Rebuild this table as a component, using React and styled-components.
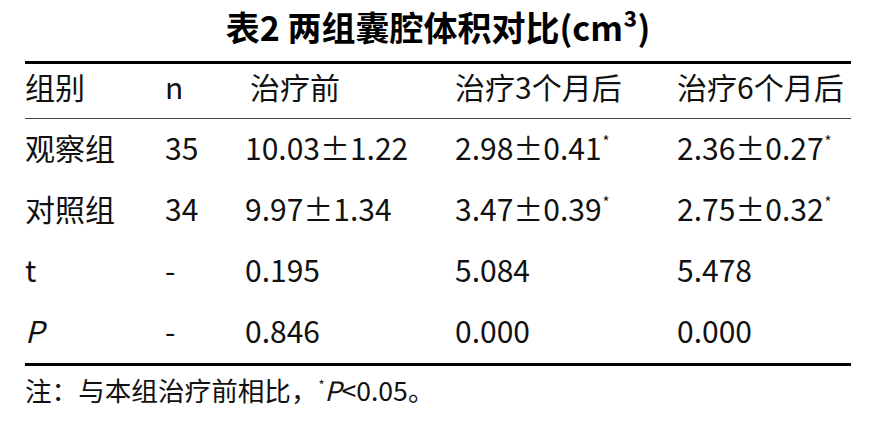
import styled, { createGlobalStyle } from "styled-components";

const rows = [
  { group: "观察组", n: "35", before: "10.03±1.22", m3: "2.98±0.41", m6: "2.36±0.27", star: true },
  { group: "对照组", n: "34", before: "9.97±1.34", m3: "3.47±0.39", m6: "2.75±0.32", star: true },
  { group: "t", n: "-", before: "0.195", m3: "5.084", m6: "5.478" },
  { group: "P", n: "-", before: "0.846", m3: "0.000", m6: "0.000", italic: true },
];

const Global = createGlobalStyle`
  html, body {
    margin: 0;
    padding: 0;
    background: #fff;
  }
  body {
    font-family: "Noto Sans CJK SC", "Noto Sans", sans-serif;
    color: #111;
  }
`;

export default function App() {
  return (
    <>
      <Global />
      <Page>
        <Title>表2 两组囊腔体积对比(cm³)</Title>
        <Table>
          <HeadRow>
            <Cell>组别</Cell>
            <Cell>n</Cell>
            <Cell indent={5}>治疗前</Cell>
            <Cell>治疗3个月后</Cell>
            <Cell>治疗6个月后</Cell>
          </HeadRow>
          {rows.map((r, i) => (
            <Row key={i}>
              <Cell>{r.italic ? <i>{r.group}</i> : r.group}</Cell>
              <Cell>{r.n}</Cell>
              <Cell>{r.before}</Cell>
              <Cell>
                {r.m3}
                {r.star && <Star>*</Star>}
              </Cell>
              <Cell>
                {r.m6}
                {r.star && <Star>*</Star>}
              </Cell>
            </Row>
          ))}
        </Table>
        <Note>
          注：与本组治疗前相比，<Star small>*</Star>
          <i>P</i>&lt;0.05。
        </Note>
      </Page>
    </>
  );
}

const Page = styled.div`
  width: 876px;
  height: 421px;
  padding: 0 25px;
  box-sizing: border-box;
  overflow: hidden;
`;

const Title = styled.div`
  height: 61px;
  line-height: 53px;
  padding-bottom: 8px;
  box-sizing: border-box;
  text-align: center;
  font-size: 34px;
  font-weight: 700;
  color: #000;
  white-space: nowrap;
`;

const Table = styled.div`
  width: 826px;
  border-top: 3px solid #000;
  border-bottom: 3px solid #000;
`;

const HeadRow = styled.div`
  display: grid;
  grid-template-columns: 140px 80px 210px 222px 1fr;
  height: 55px;
  box-sizing: border-box;
  padding: 3px 0 11px;
  line-height: 39px;
  font-size: 30px;
  border-bottom: 1.5px solid #444;
`;

const Row = styled.div`
  display: grid;
  grid-template-columns: 140px 80px 210px 222px 1fr;
  height: 61px;
  box-sizing: border-box;
  padding-bottom: 4px;
  line-height: 57px;
  font-size: 30px;
`;

const Cell = styled.div`
  white-space: nowrap;
  padding-left: ${(p) => p.indent || 0}px;

  i {
    font-style: italic;
  }
`;

const Star = styled.sup`
  font-size: ${(p) => (p.small ? "13px" : "15px")};
  line-height: 0;
  vertical-align: ${(p) => (p.small ? "11px" : "13px")};
  margin-left: 1px;
`;

const Note = styled.div`
  padding-top: 4px;
  line-height: 40px;
  font-size: 26.6px;
  white-space: nowrap;
`;
